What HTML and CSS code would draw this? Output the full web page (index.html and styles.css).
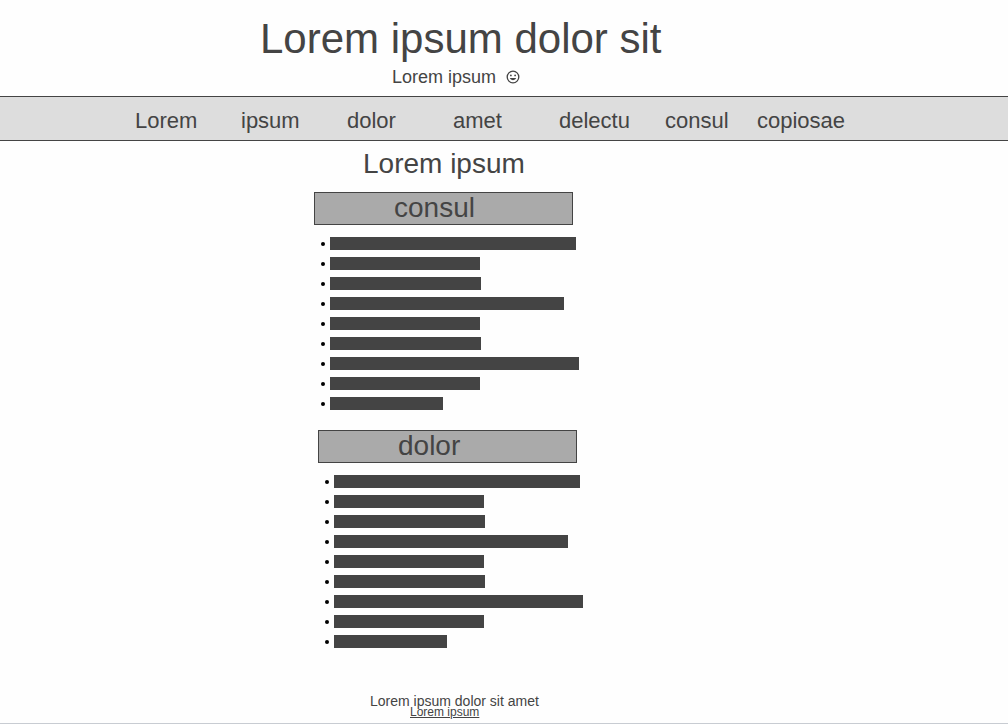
FILE: index.html
```
<!DOCTYPE html>
<html lang="la">
<head>
<meta charset="utf-8">
<meta name="viewport" content="width=device-width, initial-scale=1">
<title>Lorem ipsum dolor sit</title>
<link rel="stylesheet" href="styles.css">
</head>
<body>
<header class="masthead">
  <h1 class="title">Lorem ipsum dolor sit</h1>
  <p class="tagline">Lorem ipsum
    <svg class="smiley" viewBox="0 0 14 14" aria-hidden="true">
      <circle cx="7" cy="7" r="5.8" fill="none" stroke="currentColor" stroke-width="1.3"/>
      <circle cx="4.9" cy="5.4" r="0.9" fill="currentColor"/>
      <circle cx="9.1" cy="5.4" r="0.9" fill="currentColor"/>
      <path d="M3.7 8h6.6a3.5 3.2 0 0 1-6.6 0z" fill="currentColor"/>
    </svg>
  </p>
</header>
<nav class="nav">
  <a class="nav-link" href="#">Lorem</a>
  <a class="nav-link" href="#">ipsum</a>
  <a class="nav-link" href="#">dolor</a>
  <a class="nav-link" href="#">amet</a>
  <a class="nav-link" href="#">delectu</a>
  <a class="nav-link nav-link-short" href="#">consul</a>
  <a class="nav-link" href="#">copiosae</a>
</nav>
<main class="content">
  <h2 class="heading">Lorem ipsum</h2>
  <section class="group">
    <h3 class="group-title">consul</h3>
    <ul class="list">
      <li class="item"><span class="bar" style="width:246px"></span></li>
      <li class="item"><span class="bar" style="width:150px"></span></li>
      <li class="item"><span class="bar" style="width:151px"></span></li>
      <li class="item"><span class="bar" style="width:234px"></span></li>
      <li class="item"><span class="bar" style="width:150px"></span></li>
      <li class="item"><span class="bar" style="width:151px"></span></li>
      <li class="item"><span class="bar" style="width:249px"></span></li>
      <li class="item"><span class="bar" style="width:150px"></span></li>
      <li class="item"><span class="bar" style="width:113px"></span></li>
    </ul>
  </section>
  <section class="group group-inset">
    <h3 class="group-title">dolor</h3>
    <ul class="list">
      <li class="item"><span class="bar" style="width:246px"></span></li>
      <li class="item"><span class="bar" style="width:150px"></span></li>
      <li class="item"><span class="bar" style="width:151px"></span></li>
      <li class="item"><span class="bar" style="width:234px"></span></li>
      <li class="item"><span class="bar" style="width:150px"></span></li>
      <li class="item"><span class="bar" style="width:151px"></span></li>
      <li class="item"><span class="bar" style="width:249px"></span></li>
      <li class="item"><span class="bar" style="width:150px"></span></li>
      <li class="item"><span class="bar" style="width:113px"></span></li>
    </ul>
  </section>
</main>
<footer class="footer">
  <p class="footer-text">Lorem ipsum dolor sit amet</p>
  <a class="footer-link" href="#">Lorem ipsum</a>
</footer>
</body>
</html>
```
FILE: styles.css
```
* {
  box-sizing: border-box;
}

body {
  margin: 0;
  background: #fefefe;
  color: #444;
  font-family: "Liberation Sans", Arial, sans-serif;
}

h1, h2, h3, p, ul {
  margin: 0;
  padding: 0;
  font-weight: normal;
}

.masthead {
  display: flex;
  flex-direction: column;
  gap: 4px;
  padding: 15px 0 9px;
}

.title {
  padding-left: 260px;
  font-size: 42px;
  line-height: 48px;
}

.tagline {
  display: flex;
  align-items: center;
  gap: 10px;
  padding-left: 392px;
  font-size: 18px;
  line-height: 20px;
}

.smiley {
  width: 14px;
  height: 14px;
}

.nav {
  display: flex;
  padding: 11px 0 6px 135px;
  border: solid #444;
  border-width: 1px 0;
  background: #ddd;
  font-size: 22px;
  line-height: 26px;
}

.nav-link {
  min-width: 106px;
  color: inherit;
  text-decoration: none;
}

.nav-link-short {
  min-width: 92px;
}

.content {
  padding: 7px 0 0 314px;
}

.heading {
  margin-bottom: 12px;
  padding-left: 49px;
  font-size: 28px;
  line-height: 32px;
}

.group {
  margin-bottom: 16px;
}

.group-inset {
  margin-left: 4px;
}

.group-title {
  max-width: 259px;
  padding: 0 0 2px 79px;
  border: 1px solid #444;
  background: #aaa;
  font-size: 28px;
  line-height: 29px;
}

.list {
  margin-top: 9px;
  list-style: none;
}

.item {
  display: flex;
  align-items: center;
  gap: 5px;
  height: 20px;
  padding-left: 7px;
}

.item::before {
  content: "";
  width: 4px;
  height: 4px;
  border-radius: 50%;
  background: #000;
}

.bar {
  height: 13px;
  margin-bottom: 1px;
  background: #444;
}

.footer {
  display: flex;
  flex-direction: column;
  align-items: flex-start;
  padding: 27px 0 6px 370px;
  border-bottom: 1px solid #c8ccd2;
}

.footer-text {
  font-size: 14px;
  line-height: 12px;
}

.footer-link {
  margin-left: 40px;
  color: inherit;
  font-size: 12px;
  line-height: 10px;
}
```
